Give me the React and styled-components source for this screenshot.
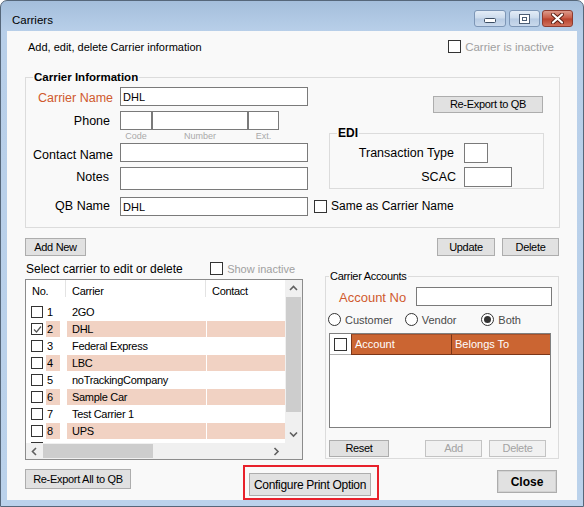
import React from "react"
import styled, { createGlobalStyle } from "styled-components"

const font = `"Liberation Sans", Arial, sans-serif`

const GlobalStyle = createGlobalStyle`
  * { box-sizing: border-box; }
  html, body { margin: 0; padding: 0; background: #fff; }
  body { font-family: ${font}; font-size: 12px; color: #000; }
`

const Window = styled.div`
  width: 584px;
  height: 507px;
  border: 1px solid #56677a;
  border-radius: 7px 7px 0 0;
  background: linear-gradient(#a4bedb 0, #b8cfe9 30px, #bbd2eb 100%);
  display: flex;
  flex-direction: column;
  overflow: hidden;
`

const TitleBar = styled.div`
  height: 30px;
  flex-shrink: 0;
  display: flex;
  align-items: flex-start;
  padding: 0 10px 0 11px;
`

const Title = styled.div`
  margin-top: 12px;
  font-size: 11.5px;
  line-height: 14px;
`

const CaptionButtons = styled.div`
  margin-left: auto;
  margin-top: 9px;
  display: flex;
`

const CaptionButton = styled.div`
  width: ${p => p.$w}px;
  height: 17px;
  margin-left: ${p => p.$gap || 0}px;
  border: 1px solid ${p => (p.$close ? "#8e3b2f" : "#7d96b6")};
  border-radius: 3px;
  background: ${p =>
    p.$close
      ? "linear-gradient(#dc9a8b, #c85a45 48%, #b8422d 52%, #d0705b)"
      : "linear-gradient(#e3ecf7, #cbdaec 48%, #b7cbe3 52%, #c9d9ec)"};
  display: flex;
  align-items: center;
  justify-content: center;
`

const Client = styled.div`
  flex: 1;
  margin: 0 6px 6px;
  background: #f9f9f9;
  padding: 9px 17px 0 18px;
  display: flex;
  flex-direction: column;
`

const HeaderRow = styled.div`
  height: 13px;
  display: flex;
  align-items: center;
  justify-content: space-between;
  padding: 0 6px 0 3px;
  font-size: 11px;
`

const CheckLabel = styled.label`
  display: inline-flex;
  align-items: center;
  gap: ${p => p.$gap || 4}px;
  font-size: ${p => p.$size || 11}px;
  color: ${p => (p.$disabled ? "#a0a0a0" : "#000")};
  margin-left: ${p => p.$ml || 0}px;
`

const Box = styled.span`
  width: ${p => p.$size || 13}px;
  height: ${p => p.$size || 13}px;
  flex-shrink: 0;
  border: 1px solid #333;
  background: #fff;
  display: flex;
  align-items: center;
  justify-content: center;
  margin-left: ${p => p.$ml || 0}px;
`

const CheckBox = ({ checked, size, ml }) => (
  <Box $size={size} $ml={ml}>
    {checked && (
      <svg width="9" height="9" viewBox="0 0 9 9">
        <polyline points="1,4.5 3.5,7 8,1.5" fill="none" stroke="#555" strokeWidth="1.2" />
      </svg>
    )}
  </Box>
)

const GroupBox = styled.div`
  position: relative;
  flex-shrink: 0;
  width: ${p => p.$w}px;
  height: ${p => p.$h}px;
  margin-top: ${p => p.$mt || 0}px;
  margin-left: ${p => p.$ml || 0}px;
  border: 1px solid #dcdcdc;
  padding-top: ${p => p.$pt || 0}px;
`

const Legend = styled.span`
  position: absolute;
  top: -7px;
  left: ${p => p.$x}px;
  padding: 0 1px;
  background: #f9f9f9;
  font-size: ${p => p.$size}px;
  font-weight: ${p => (p.$bold ? 700 : 400)};
  letter-spacing: ${p => (p.$bold ? 0 : -0.3)}px;
  line-height: 13px;
`

const TopArea = styled.div`
  display: flex;
  align-items: flex-start;
`

const FormColumn = styled.div`
  width: 282px;
  display: flex;
  flex-direction: column;
`

const FormRow = styled.div`
  display: flex;
  align-items: flex-start;
  margin-top: ${p => p.$mt || 0}px;
`

const Label = styled.div`
  width: 87px;
  height: ${p => 19 + (p.$dy || 0)}px;
  margin-right: 7px;
  margin-bottom: -${p => p.$dy || 0}px;
  flex-shrink: 0;
  text-align: right;
  padding-right: ${p => p.$inset || 0}px;
  padding-top: ${p => p.$dy || 0}px;
  line-height: 19px;
  font-size: 12.5px;
  color: ${p => (p.$accent ? "#d05a2e" : "#000")};
`

const TextInput = styled.input`
  display: block;
  flex-shrink: 0;
  width: ${p => p.$w}px;
  height: ${p => p.$h || 19}px;
  margin: 0;
  padding: 0 2px;
  border: 1px solid #7a7a7a;
  border-radius: 0;
  background: #fff;
  font: 11px ${font};
  color: #000;
  outline: none;
`

const SubLabels = styled.div`
  display: flex;
  padding-left: 94px;
  height: 13px;
`

const SubLabel = styled.div`
  width: ${p => p.$w}px;
  text-align: center;
  font-size: 9px;
  line-height: 13px;
  color: #a9a9a9;
`

const SideColumn = styled.div`
  margin-left: 21px;
  display: flex;
  flex-direction: column;
`

const Button = styled.button`
  flex-shrink: 0;
  width: ${p => p.$w}px;
  height: ${p => p.$h || 18}px;
  margin: ${p => p.$mt || 0}px 0 0 ${p => p.$ml || 0}px;
  padding: 0;
  border: 1px solid ${p => (p.disabled ? "#c3c3c3" : "#adadad")};
  border-radius: 0;
  background: ${p => (p.disabled ? "#f1f1f1" : "#e1e1e1")};
  color: ${p => (p.disabled ? "#a3a3a3" : "#000")};
  font-family: ${font};
  font-size: ${p => p.$size || 11}px;
  font-weight: ${p => (p.$bold ? 700 : 400)};
  letter-spacing: ${p => (p.$bold ? 0 : -0.3)}px;
  line-height: 1;
  box-shadow: ${p => (p.$default ? "inset 0 0 0 1px #d2d2d2" : "none")};
  cursor: default;
`

const EdiGrid = styled.div`
  display: grid;
  grid-template-columns: 124px auto;
  column-gap: 10px;
  row-gap: 4px;
  padding-top: 9px;
  align-items: center;
  justify-items: start;
`

const EdiLabel = styled.div`
  justify-self: end;
  font-size: 12.5px;
  margin-right: ${p => p.$shift || 0}px;
`

const SameAs = styled(CheckLabel)`
  margin-left: 6px;
  font-size: 12px;
  line-height: 19px;
`

const ActionRow = styled.div`
  display: flex;
  margin-top: 10px;
  padding-right: 1px;
`

const MidArea = styled.div`
  display: flex;
  align-items: flex-start;
`

const ListColumn = styled.div`
  width: 278px;
  display: flex;
  flex-direction: column;
`

const SelectRow = styled.div`
  height: 23px;
  padding: 2px 8px 0 1px;
  display: flex;
  align-items: center;
  justify-content: space-between;
  font-size: 12px;
`

const ListBox = styled.div`
  width: 278px;
  height: 181px;
  border: 1px solid #8c8c8c;
  background: #fff;
  display: grid;
  grid-template-columns: 259px 17px;
  grid-template-rows: 163px 16px;
`

const GridArea = styled.div`
  overflow: hidden;
  font-size: 11px;
  letter-spacing: -0.3px;
`

const GridHead = styled.div`
  display: flex;
  height: 23px;
`

const HeadCell = styled.div`
  width: ${p => p.$w}px;
  flex-shrink: 0;
  padding-left: 6px;
  line-height: 23px;
  background: ${p =>
    p.$sep ? "linear-gradient(#e3e3e3, #e3e3e3) right top / 1px 17px no-repeat" : "none"};
`

const DataRow = styled.div`
  display: flex;
  height: 17px;
  padding-top: 1px;
`

const NoCell = styled.div`
  width: 40px;
  flex-shrink: 0;
  display: flex;
  align-items: center;
  padding-left: 5px;
`

const NumBox = styled.div`
  width: 14px;
  height: 16px;
  margin-left: 3px;
  padding-left: 1px;
  line-height: 16px;
  background: ${p => (p.$alt ? "#f1d2c3" : "transparent")};
`

const Cell = styled.div`
  width: ${p => (p.$w ? `${p.$w}px` : "auto")};
  flex: ${p => (p.$w ? "0 0 auto" : "1")};
  margin-left: 1px;
  padding-left: ${p => p.$pl || 0}px;
  line-height: 16px;
  background: ${p => (p.$alt ? "#f1d2c3" : "transparent")};
  white-space: nowrap;
`

const VScroll = styled.div`
  background: #f0f0f0;
  display: flex;
  flex-direction: column;
`

const HScroll = styled.div`
  background: #f0f0f0;
  display: flex;
  align-items: center;
`

const ArrowCell = styled.div`
  width: ${p => p.$w || 17}px;
  height: ${p => p.$h || 17}px;
  flex-shrink: 0;
  display: flex;
  align-items: center;
  justify-content: center;
  margin-top: ${p => p.$mt || 0}px;
  margin-left: ${p => p.$ml || 0}px;
`

const Thumb = styled.div`
  background: #cdcdcd;
  flex-shrink: 0;
  width: ${p => p.$w}px;
  height: ${p => p.$h}px;
  margin-left: ${p => p.$ml || 0}px;
`

const Corner = styled.div`
  background: #f0f0f0;
`

const AccountRow = styled.div`
  display: flex;
  align-items: center;
  justify-content: space-between;
  padding: 0 6px 0 13px;
  height: 19px;
`

const AccountLabel = styled.div`
  font-size: 13px;
  color: #d05a2e;
  padding-top: 1px;
`

const RadioRow = styled.div`
  display: flex;
  height: 13px;
  margin-top: 7px;
  padding-left: 2px;
`

const RadioItem = styled.label`
  width: 88px;
  display: flex;
  align-items: center;
  gap: 4px;
  font-size: 11px;
  color: #4a4a4a;
`

const RadioCircle = styled.span`
  width: 13px;
  height: 13px;
  border: 1px solid #333;
  border-radius: 50%;
  background: #fff;
  display: flex;
  align-items: center;
  justify-content: center;
  &::after {
    content: "";
    display: ${p => (p.$on ? "block" : "none")};
    width: 7px;
    height: 7px;
    border-radius: 50%;
    background: #333;
  }
`

const AcctGrid = styled.div`
  width: 222px;
  height: 95px;
  margin: 7px 0 0 3px;
  border: 1px solid #7f7f7f;
  background: #fff;
`

const AcctHead = styled.div`
  display: flex;
  height: 21px;
`

const AcctCheckHead = styled.div`
  width: 21px;
  display: flex;
  align-items: center;
  padding-left: 4px;
  border-bottom: 1px solid #b0b0b0;
`

const AcctHeadCell = styled.div`
  width: ${p => (p.$w ? `${p.$w}px` : "auto")};
  flex: ${p => (p.$w ? "0 0 auto" : "1")};
  background: #cb6532;
  border-left: 1px solid #7b3618;
  border-bottom: 1px solid #7b3618;
  border-top: 1px solid #a8512a;
  color: #fff;
  font-size: 11px;
  line-height: 19px;
  padding-left: 3px;
`

const AcctButtons = styled.div`
  display: flex;
  margin-top: 12px;
`

const BottomRow = styled.div`
  display: flex;
  align-items: flex-start;
  margin-top: 5px;
`

const Highlight = styled.div`
  width: 136px;
  height: 35px;
  margin-left: 112px;
  border: 2px solid #e8212b;
  padding: 6px 0 0 4px;
  display: flex;
`

const Chevron = ({ dir }) => {
  const pts = {
    up: "1,5 4.5,1.5 8,5",
    down: "1,1.5 4.5,5 8,1.5",
    left: "5,1 1.5,4.5 5,8",
    right: "1.5,1 5,4.5 1.5,8",
  }[dir]
  const vertical = dir === "up" || dir === "down"
  return (
    <svg width={vertical ? 9 : 7} height={vertical ? 7 : 9} viewBox={vertical ? "0 0 9 7" : "0 0 7 9"}>
      <polyline points={pts} fill="none" stroke="#606060" strokeWidth="1.6" />
    </svg>
  )
}

const carriers = ["2GO", "DHL", "Federal Express", "LBC", "noTrackingCompany", "Sample Car", "Test Carrier 1", "UPS", ""]

export default function App() {
  return (
    <>
      <GlobalStyle />
      <Window>
        <TitleBar>
          <Title>Carriers</Title>
          <CaptionButtons>
            <CaptionButton $w={32}>
              <svg width="12" height="6" viewBox="0 0 12 6" style={{ marginTop: 5 }}>
                <rect x="0.5" y="0.5" width="11" height="4" rx="1" fill="#fff" stroke="#3b4d63" />
              </svg>
            </CaptionButton>
            <CaptionButton $w={31} $gap={3}>
              <svg width="11" height="10" viewBox="0 0 11 10">
                <rect x="0.5" y="0.5" width="10" height="9" fill="#fff" stroke="#4c5e75" />
                <rect x="3.5" y="3.5" width="4" height="3" fill="none" stroke="#4c5e75" />
              </svg>
            </CaptionButton>
            <CaptionButton $w={31} $gap={2} $close>
              <svg width="13" height="11" viewBox="0 0 13 11">
                <path d="M2,1.5 L11,9.5 M11,1.5 L2,9.5" stroke="#5a1f14" strokeWidth="4" strokeLinecap="round" />
                <path d="M2,1.5 L11,9.5 M11,1.5 L2,9.5" stroke="#fff" strokeWidth="2.2" strokeLinecap="round" />
              </svg>
            </CaptionButton>
          </CaptionButtons>
        </TitleBar>

        <Client>
          <HeaderRow>
            <span>Add, edit, delete Carrier information</span>
            <CheckLabel $disabled $size={11.5}>
              <CheckBox />
              Carrier is inactive
            </CheckLabel>
          </HeaderRow>

          <GroupBox $w={535} $h={151} $mt={24} $pt={9}>
            <Legend $x={7} $size={11.5} $bold>Carrier Information</Legend>
            <TopArea>
              <FormColumn>
                <FormRow>
                  <Label $accent $dy={2}>Carrier Name</Label>
                  <TextInput $w={188} defaultValue="DHL" readOnly />
                </FormRow>
                <FormRow $mt={5}>
                  <Label $inset={3} $dy={1}>Phone</Label>
                  <TextInput $w={32} readOnly />
                  <TextInput $w={96} readOnly />
                  <TextInput $w={31} readOnly />
                </FormRow>
                <SubLabels>
                  <SubLabel $w={32}>Code</SubLabel>
                  <SubLabel $w={96}>Number</SubLabel>
                  <SubLabel $w={31}>Ext.</SubLabel>
                </SubLabels>
                <FormRow>
                  <Label $dy={3}>Contact Name</Label>
                  <TextInput $w={188} readOnly />
                </FormRow>
                <FormRow $mt={5}>
                  <Label $inset={4} $dy={1}>Notes</Label>
                  <TextInput $w={188} $h={23} readOnly />
                </FormRow>
              </FormColumn>
              <SideColumn>
                <Button $w={110} $h={17} $ml={104} $mt={9}>Re-Export to QB</Button>
                <GroupBox $w={215} $h={56} $mt={20}>
                  <Legend $x={7} $size={12} $bold>EDI</Legend>
                  <EdiGrid>
                    <EdiLabel>Transaction Type</EdiLabel>
                    <TextInput $w={24} $h={20} readOnly />
                    <EdiLabel $shift={-2}>SCAC</EdiLabel>
                    <TextInput $w={48} $h={20} readOnly />
                  </EdiGrid>
                </GroupBox>
              </SideColumn>
            </TopArea>
            <FormRow $mt={7}>
              <Label $inset={3}>QB Name</Label>
              <TextInput $w={188} defaultValue="DHL" readOnly />
              <SameAs>
                <CheckBox />
                Same as Carrier Name
              </SameAs>
            </FormRow>
          </GroupBox>

          <ActionRow>
            <Button $w={61}>Add New</Button>
            <Button $w={58} $ml={351}>Update</Button>
            <Button $w={57} $ml={7}>Delete</Button>
          </ActionRow>

          <MidArea>
            <ListColumn>
              <SelectRow>
                <span>Select carrier to edit or delete</span>
                <CheckLabel $disabled>
                  <CheckBox />
                  Show inactive
                </CheckLabel>
              </SelectRow>
              <ListBox>
                <GridArea>
                  <GridHead>
                    <HeadCell $w={40} $sep>No.</HeadCell>
                    <HeadCell $w={140} $sep>Carrier</HeadCell>
                    <HeadCell $w={79}>Contact</HeadCell>
                  </GridHead>
                  {carriers.map((name, i) => {
                    const alt = i % 2 === 1 && name !== ""
                    return (
                      <DataRow key={i}>
                        <NoCell>
                          <CheckBox size={12} checked={i === 1} />
                          <NumBox $alt={alt}>{name ? i + 1 : ""}</NumBox>
                        </NoCell>
                        <Cell $w={139} $pl={5} $alt={alt}>{name}</Cell>
                        <Cell $alt={alt} />
                      </DataRow>
                    )
                  })}
                </GridArea>
                <VScroll>
                  <ArrowCell><Chevron dir="up" /></ArrowCell>
                  <Thumb $w={15} $h={115} $ml={1} />
                  <ArrowCell $mt={14}><Chevron dir="down" /></ArrowCell>
                </VScroll>
                <HScroll>
                  <ArrowCell $h={16}><Chevron dir="left" /></ArrowCell>
                  <Thumb $w={110} $h={14} />
                  <ArrowCell $h={16} $ml={115}><Chevron dir="right" /></ArrowCell>
                </HScroll>
                <Corner />
              </ListBox>
            </ListColumn>

            <GroupBox $w={234} $h={183} $mt={20} $ml={22} $pt={10}>
              <Legend $x={3} $size={11}>Carrier Accounts</Legend>
              <AccountRow>
                <AccountLabel>Account No</AccountLabel>
                <TextInput $w={136} readOnly />
              </AccountRow>
              <RadioRow>
                <RadioItem><RadioCircle />Customer</RadioItem>
                <RadioItem><RadioCircle />Vendor</RadioItem>
                <RadioItem><RadioCircle $on />Both</RadioItem>
              </RadioRow>
              <AcctGrid>
                <AcctHead>
                  <AcctCheckHead><CheckBox /></AcctCheckHead>
                  <AcctHeadCell $w={100}>Account</AcctHeadCell>
                  <AcctHeadCell>Belongs To</AcctHeadCell>
                </AcctHead>
              </AcctGrid>
              <AcctButtons>
                <Button $w={60} $h={17} $ml={3}>Reset</Button>
                <Button $w={57} $h={17} $ml={36} disabled>Add</Button>
                <Button $w={57} $h={17} $ml={7} disabled>Delete</Button>
              </AcctButtons>
            </GroupBox>
          </MidArea>

          <BottomRow>
            <Button $w={106} $h={20} $mt={4}>Re-Export All to QB</Button>
            <Highlight>
              <Button $w={122} $h={23} $size={12}>Configure Print Option</Button>
            </Highlight>
            <Button $w={60} $h={23} $mt={5} $ml={118} $size={12} $bold $default>Close</Button>
          </BottomRow>
        </Client>
      </Window>
    </>
  )
}
